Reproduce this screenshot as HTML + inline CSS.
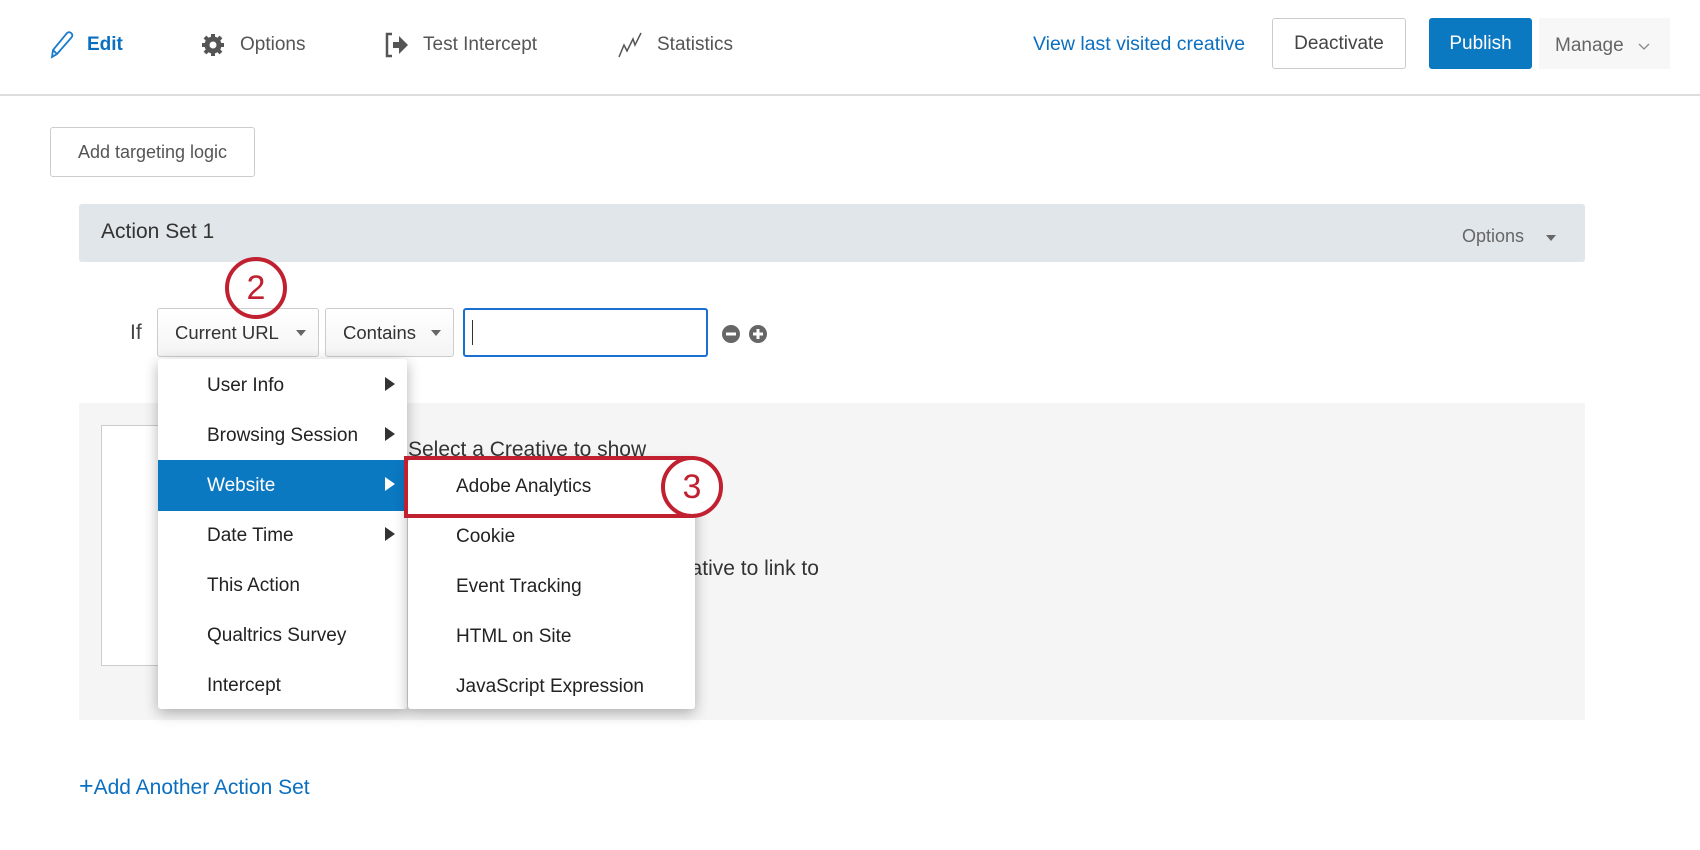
<!DOCTYPE html>
<html><head><style>
*{box-sizing:border-box;margin:0;padding:0}
body{width:1700px;height:850px;background:#fff;font-family:"Liberation Sans",sans-serif;color:#333;position:relative;overflow:hidden}
.a{position:absolute;white-space:nowrap}
.nav{font-size:19px;color:#555;top:34px}
.btn{position:absolute;border:1px solid #ccc;border-radius:3px;background:#fff;display:flex;align-items:center;justify-content:center}
.mi{position:absolute;left:0;width:100%;height:50px;font-size:19px;color:#222;display:flex;align-items:center;padding-left:49px}
.arr{position:absolute;right:12px;top:50%;margin-top:-9px;width:0;height:0;border-left:10px solid #333;border-top:7px solid transparent;border-bottom:7px solid transparent}
</style></head><body>
<div class="a" style="left:0;top:94px;width:1700px;height:2px;background:#ddd"></div>
<svg class="a" style="left:48px;top:30px" width="26" height="30" viewBox="0 0 26 30"><path d="M4 27 L5 20 L19 3 Q22 1 24 4 Q25 6 23 8 L9 24 Z M5 20 L9 24" fill="none" stroke="#1a7ccc" stroke-width="1.8"/></svg>
<div class="a nav" style="left:87px;color:#0b6fc0;font-weight:bold">Edit</div>
<svg class="a" style="left:201px;top:33px" width="24" height="24" viewBox="0 0 24 24"><circle cx="12" cy="12" r="6.5" fill="none" stroke="#555" stroke-width="4"/><g stroke="#555" stroke-width="4"><line x1="12" y1="1" x2="12" y2="23"/><line x1="1" y1="12" x2="23" y2="12"/><line x1="4" y1="4" x2="20" y2="20"/><line x1="20" y1="4" x2="4" y2="20"/></g><circle cx="12" cy="12" r="3.5" fill="#fff"/></svg>
<div class="a nav" style="left:240px">Options</div>
<svg class="a" style="left:384px;top:31px" width="26" height="28" viewBox="0 0 26 28"><path d="M8 3 H3 V25 H8" fill="none" stroke="#555" stroke-width="2.5"/><path d="M9 11 H15 V5 L24 14 L15 23 V17 H9 Z" fill="#555"/></svg>
<div class="a nav" style="left:423px">Test Intercept</div>
<svg class="a" style="left:617px;top:31px" width="26" height="28" viewBox="0 0 26 28"><path d="M2 26 L7 14 L10 20 L16 8 L18 14 L24 2" fill="none" stroke="#555" stroke-width="1.5"/></svg>
<div class="a nav" style="left:657px">Statistics</div>
<div class="a" style="left:1033px;top:33px;font-size:19.5px;color:#0b6fc0">View last visited creative</div>
<div class="btn" style="left:1272px;top:18px;width:134px;height:51px;font-size:19px;color:#444">Deactivate</div>
<div class="btn" style="left:1429px;top:18px;width:103px;height:51px;font-size:19px;color:#fff;background:#0b78c2;border-color:#0b78c2">Publish</div>
<div class="a" style="left:1539px;top:18px;width:131px;height:51px;background:#f7f7f7"></div>
<div class="a" style="left:1555px;top:35px;font-size:19px;color:#666">Manage</div>
<svg class="a" style="left:1638px;top:43px" width="12" height="8" viewBox="0 0 12 8"><path d="M1 1 L6 6 L11 1" fill="none" stroke="#888" stroke-width="1.3"/></svg>
<div class="btn" style="left:50px;top:127px;width:205px;height:50px;font-size:18px;color:#555">Add targeting logic</div>
<div class="a" style="left:79px;top:204px;width:1506px;height:58px;background:#e0e6ea;border-radius:3px"></div>
<div class="a" style="left:101px;top:220px;font-size:21px;color:#333">Action Set 1</div>
<div class="a" style="left:1462px;top:226px;font-size:18px;color:#666">Options</div>
<div class="a" style="left:1546px;top:235px;border-top:6px solid #666;border-left:5px solid transparent;border-right:5px solid transparent"></div>
<div class="a" style="left:130px;top:321px;font-size:21px;color:#444">If</div>
<div class="btn" style="left:157px;top:308px;width:162px;height:49px;font-size:18.5px;color:#333;justify-content:flex-start;padding-left:17px;background:linear-gradient(#fff,#f4f4f4)">Current URL<span style="position:absolute;right:12px;top:21px;border-top:6px solid #666;border-left:5px solid transparent;border-right:5px solid transparent"></span></div>
<div class="btn" style="left:325px;top:308px;width:129px;height:49px;font-size:18.5px;color:#333;justify-content:flex-start;padding-left:17px;background:linear-gradient(#fff,#f4f4f4)">Contains<span style="position:absolute;right:12px;top:21px;border-top:6px solid #666;border-left:5px solid transparent;border-right:5px solid transparent"></span></div>
<div class="a" style="left:463px;top:308px;width:245px;height:49px;border:2px solid #1a6fd1;border-radius:3px;background:#fff"></div>
<div class="a" style="left:472px;top:320px;width:1px;height:25px;background:#333"></div>
<svg class="a" style="left:721px;top:324px" width="50" height="20" viewBox="0 0 50 20"><circle cx="10" cy="10" r="9" fill="#666"/><rect x="5" y="8.5" width="10" height="3" fill="#fff"/><circle cx="37" cy="10" r="9" fill="#666"/><rect x="32" y="8.5" width="10" height="3" fill="#fff"/><rect x="35.5" y="5" width="3" height="10" fill="#fff"/></svg>
<div class="a" style="left:79px;top:403px;width:1506px;height:317px;background:#f5f5f5"></div>
<div class="a" style="left:101px;top:425px;width:200px;height:241px;background:#fff;border:1px solid #ccc"></div>
<div class="a" style="left:408px;top:438px;font-size:21px;color:#333">Select a Creative to show</div>
<div class="a" style="left:575px;top:557px;font-size:21px;color:#333">Select a Creative to link to</div>
<div class="a" style="left:225px;top:257px;width:62px;height:62px;border:4px solid #c0202f;border-radius:50%;font-size:34px;color:#c0202f;text-align:center;line-height:54px">2</div>
<div class="a" style="left:158px;top:359px;width:249px;height:350px;background:#fff;border-radius:3px;box-shadow:0 4px 14px rgba(0,0,0,.3)">
<div class="mi" style="top:2px">User Info<span class="arr"></span></div>
<div class="mi" style="top:52px">Browsing Session<span class="arr"></span></div>
<div class="mi" style="top:101px;height:51px;background:#0b78c2;color:#fff">Website<span class="arr" style="border-left-color:#fff"></span></div>
<div class="mi" style="top:152px">Date Time<span class="arr"></span></div>
<div class="mi" style="top:202px">This Action</div>
<div class="mi" style="top:252px">Qualtrics Survey</div>
<div class="mi" style="top:302px">Intercept</div>
</div>
<div class="a" style="left:408px;top:460px;width:287px;height:249px;background:#fff;border-radius:3px;box-shadow:0 4px 14px rgba(0,0,0,.3)">
<div class="mi" style="top:2px;padding-left:48px">Adobe Analytics</div>
<div class="mi" style="top:52px;padding-left:48px">Cookie</div>
<div class="mi" style="top:102px;padding-left:48px">Event Tracking</div>
<div class="mi" style="top:152px;padding-left:48px">HTML on Site</div>
<div class="mi" style="top:202px;padding-left:48px">JavaScript Expression</div>
</div>
<div class="a" style="left:404px;top:456px;width:286px;height:62px;border:4px solid #c0202f"></div>
<div class="a" style="left:661px;top:456px;width:62px;height:62px;border:4px solid #c0202f;border-radius:50%;background:#fff;font-size:34px;color:#c0202f;text-align:center;line-height:54px">3</div>
<div class="a" style="left:79px;top:776px;font-size:21px;color:#0b6fc0"><span style="font-size:25px;line-height:20px">+</span>Add Another Action Set</div>
</body></html>
